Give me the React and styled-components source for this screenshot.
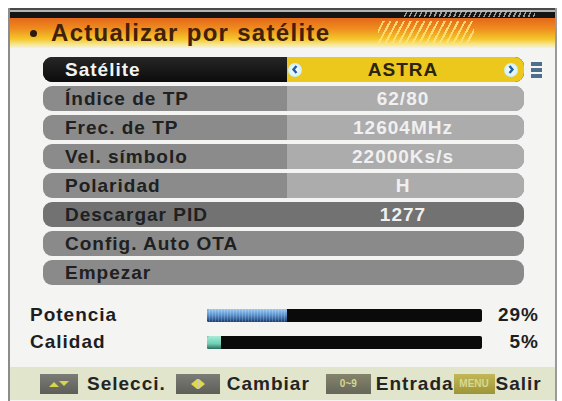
import React from 'react';
import styled, { createGlobalStyle } from 'styled-components';

const GlobalStyle = createGlobalStyle`
  html, body {
    margin: 0;
    padding: 0;
    background: #ffffff;
  }
  body {
    font-family: "Liberation Sans", Arial, sans-serif;
  }
`;

const Screen = styled.div`
  width: 562px;
  height: 401px;
  padding: 8px 5px 0 8px;
  box-sizing: border-box;
  overflow: hidden;
`;

const Frame = styled.div`
  display: flex;
  flex-direction: column;
  height: 100%;
  box-sizing: border-box;
  border-left: 2px solid #8c8c8c;
  border-right: 2px solid #9a9a9a;
  background: #f4f4f3;
`;

const TopBar = styled.div`
  display: flex;
  justify-content: flex-end;
  height: 10px;
  background: linear-gradient(
    to bottom,
    #4a4a4a 0 2px,
    #b4b4b4 2px 4px,
    #141414 4px 100%
  );
`;

const TopHatch = styled.div`
  width: 132px;
  height: 6px;
  margin: 3px 20px 0 0;
  background: repeating-linear-gradient(
    115deg,
    transparent 0 3px,
    rgba(200, 200, 200, 0.75) 3px 4.5px
  );
`;

const Header = styled.div`
  display: flex;
  align-items: center;
  height: 30px;
  padding-left: 20px;
  background: linear-gradient(
    to bottom,
    #e4681a 0%,
    #ee8c1e 35%,
    #f4c62a 70%,
    #f6e690 88%,
    #f4f1e0 100%
  );
`;

const Bullet = styled.span`
  width: 7px;
  height: 7px;
  border-radius: 50%;
  background: #2a1a10;
  margin-right: 14px;
`;

const Title = styled.h1`
  margin: 0;
  font-size: 24px;
  font-weight: bold;
  letter-spacing: 1.3px;
  color: #42200a;
  line-height: 1;
`;

const TitleHatch = styled.div`
  flex: 0 0 96px;
  height: 24px;
  margin-left: 48px;
  background: repeating-linear-gradient(
    118deg,
    transparent 0 4px,
    rgba(255, 226, 120, 0.9) 4px 6px
  );
`;

const Menu = styled.div`
  display: flex;
  flex-direction: column;
  gap: 4px;
  padding: 9px 0 0 33px;
`;

const Line = styled.div`
  display: flex;
  align-items: center;
  gap: 7px;
`;

const Row = styled.div`
  display: grid;
  grid-template-columns: 244px 1fr;
  width: 481px;
  height: 25px;
  border-radius: 9px;
  overflow: hidden;
  font-size: 19px;
  font-weight: bold;
  letter-spacing: 1px;
  background: ${p => p.$bg};
`;

const Label = styled.div`
  display: flex;
  align-items: center;
  padding-left: 22px;
  color: ${p => p.$color || '#202020'};
  background: ${p => p.$bg || 'transparent'};
  white-space: nowrap;
`;

const Value = styled.div`
  display: flex;
  align-items: center;
  padding: 0 6px 0 1px;
  color: ${p => p.$color || '#f0f0f0'};
  background: ${p => p.$bg || 'transparent'};
`;

const ValueText = styled.span`
  flex: 1;
  text-align: center;
  white-space: nowrap;
`;

const ArrowDot = styled.span`
  display: flex;
  align-items: center;
  justify-content: center;
  width: 14px;
  height: 14px;
  border-radius: 50%;
  background: radial-gradient(circle, #ffffff 0%, #d6f2f6 60%, #a8dce4 100%);
`;

const MenuIcon = styled.div`
  display: flex;
  flex-direction: column;
  gap: 2px;
  width: 11px;

  span {
    height: 4px;
    background: #4e6e8e;
  }
`;

const Signal = styled.div`
  display: grid;
  grid-template-columns: 177px 275px 1fr;
  grid-auto-rows: 24px;
  row-gap: 3px;
  align-items: center;
  margin-top: 18px;
  padding: 0 16px 0 20px;
  font-size: 19px;
  font-weight: bold;
  letter-spacing: 1px;
  color: #1e1e1e;
`;

const Percent = styled.span`
  text-align: right;
`;

const Bar = styled.div`
  height: 13px;
  border-radius: 2px;
  background: #0a0a0a;
  overflow: hidden;
`;

const Fill = styled.div`
  height: 100%;
  background: ${p => p.$fill};
`;

const Footer = styled.div`
  display: flex;
  align-items: center;
  height: 33px;
  margin-top: auto;
  margin-bottom: 1px;
  padding-left: 30px;
  background: #e1e5cb;
  font-size: 19px;
  font-weight: bold;
  letter-spacing: 1px;
  color: #242424;
`;

const Key = styled.div`
  display: flex;
  align-items: center;
  gap: ${p => p.$gap || 9}px;
  margin-left: ${p => p.$offset || 0}px;
`;

const KeyBox = styled.span`
  display: flex;
  align-items: center;
  justify-content: center;
  width: ${p => p.$w}px;
  height: 20px;
  background: ${p => p.$bg || 'linear-gradient(to bottom, #7c7c76, #5e5e58)'};
  color: #d8d890;
  font-size: 10px;
  letter-spacing: 0;
`;

const Chevron = ({ dir }) => (
  <svg width="8" height="9" viewBox="0 0 8 9">
    <path
      d={dir === 'left' ? 'M5.5 1 L2.5 4.5 L5.5 8' : 'M2.5 1 L5.5 4.5 L2.5 8'}
      fill="none"
      stroke="#1e5ea8"
      strokeWidth="2.4"
    />
  </svg>
);

const rows = [
  { label: 'Índice de TP', value: '62/80' },
  { label: 'Frec. de TP', value: '12604MHz' },
  { label: 'Vel. símbolo', value: '22000Ks/s' },
  { label: 'Polaridad', value: 'H' },
];

const App = () => (
  <Screen>
    <GlobalStyle />
    <Frame>
      <TopBar>
        <TopHatch />
      </TopBar>
      <Header>
        <Bullet />
        <Title>Actualizar por satélite</Title>
        <TitleHatch />
      </Header>

      <Menu>
        <Line>
          <Row $bg="#111">
            <Label $color="#f2f2f2" $bg="linear-gradient(to bottom, #262626, #0c0c0c)">
              Satélite
            </Label>
            <Value $color="#2a2410" $bg="#ecc81c">
              <ArrowDot><Chevron dir="left" /></ArrowDot>
              <ValueText>ASTRA</ValueText>
              <ArrowDot><Chevron dir="right" /></ArrowDot>
            </Value>
          </Row>
          <MenuIcon>
            <span />
            <span />
            <span />
          </MenuIcon>
        </Line>
        {rows.map(r => (
          <Row key={r.label} $bg="#8b8b8b">
            <Label>{r.label}</Label>
            <Value $bg="#acacac">
              <ValueText>{r.value}</ValueText>
            </Value>
          </Row>
        ))}
        <Row $bg="#727272">
          <Label>Descargar PID</Label>
          <Value>
            <ValueText>1277</ValueText>
          </Value>
        </Row>
        <Row $bg="#8a8a8a">
          <Label>Config. Auto OTA</Label>
          <Value />
        </Row>
        <Row $bg="#8a8a8a">
          <Label>Empezar</Label>
          <Value />
        </Row>
      </Menu>

      <Signal>
        <span>Potencia</span>
        <Bar>
          <Fill
            style={{ width: '29%' }}
            $fill="repeating-linear-gradient(90deg, transparent 0 2px, rgba(255,255,255,0.18) 2px 3px), linear-gradient(to bottom, #9cc8f0, #5a94d0 45%, #1c3c74)"
          />
        </Bar>
        <Percent>29%</Percent>
        <span>Calidad</span>
        <Bar>
          <Fill
            style={{ width: '5%' }}
            $fill="linear-gradient(to bottom, #a8ecd8, #70cdb4 60%, #2c6c60)"
          />
        </Bar>
        <Percent>5%</Percent>
      </Signal>

      <Footer>
        <Key>
          <KeyBox $w={38}>
            <svg width="22" height="8" viewBox="0 0 22 8">
              <path d="M1 7 L6 2 L11 7 Z" fill="#d6d64a" />
              <path d="M11 1 L16 6 L21 1 Z" fill="#d6d64a" />
            </svg>
          </KeyBox>
          Selecci.
        </Key>
        <Key $offset={10} $gap={7}>
          <KeyBox $w={44}>
            <svg width="16" height="12" viewBox="0 0 16 12">
              <path d="M7 1 L1 6 L7 11 Z" fill="#e0d84a" />
              <path d="M9 1 L15 6 L9 11 Z" fill="#e0d84a" />
              <rect x="7.3" y="1" width="1.4" height="10" fill="#f4f4d0" />
            </svg>
          </KeyBox>
          Cambiar
        </Key>
        <Key $offset={16} $gap={5}>
          <KeyBox $w={45} $bg="linear-gradient(to bottom, #84846c, #66665a)">
            0~9
          </KeyBox>
          Entrada
        </Key>
        <Key $gap={1}>
          <KeyBox $w={41} $bg="linear-gradient(to bottom, #c2b858, #9c9438)">
            MENU
          </KeyBox>
          Salir
        </Key>
      </Footer>
    </Frame>
  </Screen>
);

export default App;
